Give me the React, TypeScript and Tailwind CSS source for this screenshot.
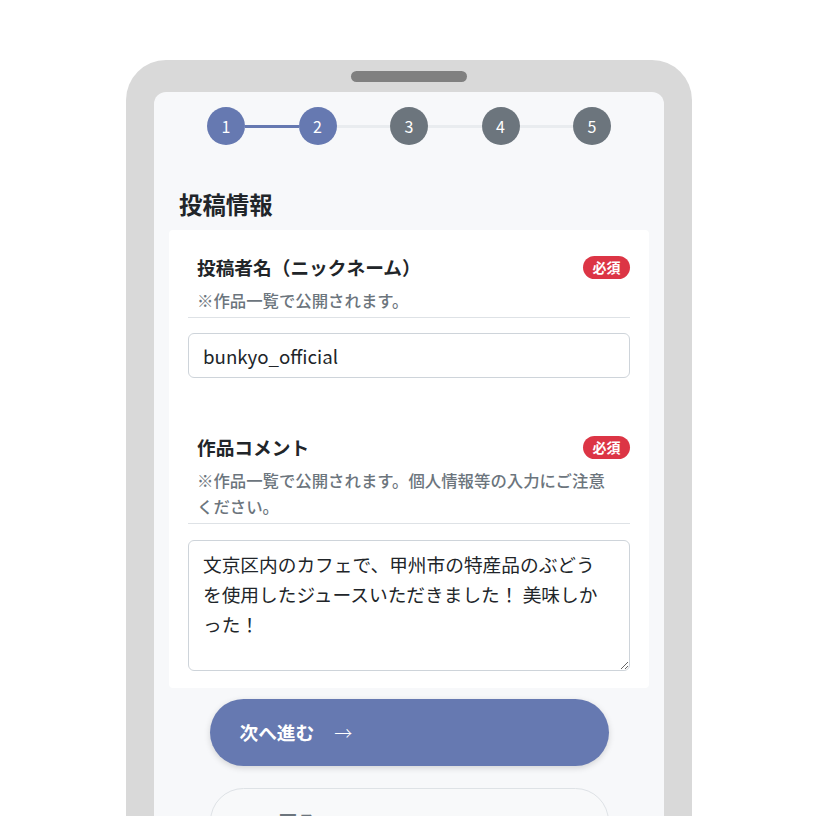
import React from "react";

const font = { fontFamily: '"Noto Sans CJK JP", "Noto Sans", sans-serif' };

function Step({ n, active }: { n: number; active: boolean }) {
  return (
    <div
      className={
        "flex h-[38px] w-[38px] shrink-0 items-center justify-center rounded-full text-[16px] text-white " +
        (active ? "bg-[#6679b1]" : "bg-[#6c757d]")
      }
    >
      {n}
    </div>
  );
}

function Stepper() {
  const steps = [1, 2, 3, 4, 5];
  return (
    <div className="mx-auto flex w-[404px] items-center">
      {steps.map((n, i) => (
        <React.Fragment key={n}>
          {i > 0 && <div className={"h-[3px] flex-1 " + (i === 1 ? "bg-[#6679b1]" : "bg-[#e9ecef]")} />}
          <Step n={n} active={n <= 2} />
        </React.Fragment>
      ))}
    </div>
  );
}

function FieldHeader({ label, help }: { label: string; help: string }) {
  return (
    <div>
      <div className="flex items-center justify-between">
        <span className="pl-[9px] text-[18.7px] font-bold leading-[26px] text-[#212529]">{label}</span>
        <span className="flex h-[23px] w-[47px] items-center justify-center rounded-full bg-[#dc3545] text-[14px] font-bold text-white">
          必須
        </span>
      </div>
      <p className="mt-[7px] pl-[9px] pr-[10px] text-[16.4px] font-medium leading-[26px] text-[#6c757d]">{help}</p>
      <div className="mt-[4px] h-px bg-[#dee2e6]" />
    </div>
  );
}

export default function App() {
  return (
    <div className="h-[816px] overflow-hidden bg-white pt-[60px]" style={font}>
      <div className="ml-[126px] w-[566px] rounded-t-[40px] bg-[#d9d9d9] px-[28px] pt-[11px]">
        <div className="mx-auto h-[11px] w-[116px] rounded-full bg-[#808080]" />
        <div className="mt-[10px] h-[800px] rounded-t-[12px] bg-[#f7f8fa] pt-[15px]">
          <Stepper />
          <h1 className="ml-[25px] mt-[40px] text-[23.4px] font-bold leading-[39px] text-[#212529]">投稿情報</h1>
          <div className="mx-[15px] mt-[6px] rounded-[4px] bg-white px-[19px] pb-[17px] pt-[24px]">
            <FieldHeader label="投稿者名（ニックネーム）" help="※作品一覧で公開されます。" />
            <input
              readOnly
              value="bunkyo_official"
              className="mt-[15px] h-[45px] w-full rounded-[6px] border border-[#ced4da] bg-white px-[14px] text-[18.7px] text-[#212529] outline-none"
              style={font}
            />
            <div className="mt-[56px]">
              <FieldHeader
                label="作品コメント"
                help="※作品一覧で公開されます。個人情報等の入力にご注意ください。"
              />
            </div>
            <textarea
              readOnly
              value="文京区内のカフェで、甲州市の特産品のぶどうを使用したジュースいただきました！ 美味しかった！"
              className="mt-[16px] block h-[131px] w-full rounded-[6px] border border-[#ced4da] bg-white pl-[14px] pr-[16px] py-[8px] text-[18.7px] leading-[29.9px] text-[#212529] outline-none"
              style={font}
            />
          </div>
          <button className="mx-auto mt-[11px] flex h-[67px] w-[399px] items-center gap-[20px] rounded-full bg-[#6679b1] pl-[30px] text-[18.7px] font-bold text-white shadow-[0_2px_6px_rgba(0,0,0,0.15)]">
            <span>次へ進む</span>
            <span className="text-[18px] font-light">→</span>
          </button>
          <button className="mx-auto mt-[22px] flex h-[67px] w-[399px] items-center gap-[20px] rounded-full border border-[#dee2e6] bg-[#f8f9fa] pl-[30px] text-[18.7px] font-bold text-[#6c757d]">
            <span className="text-[18px] font-light">←</span>
            <span>戻る</span>
          </button>
        </div>
      </div>
    </div>
  );
}
